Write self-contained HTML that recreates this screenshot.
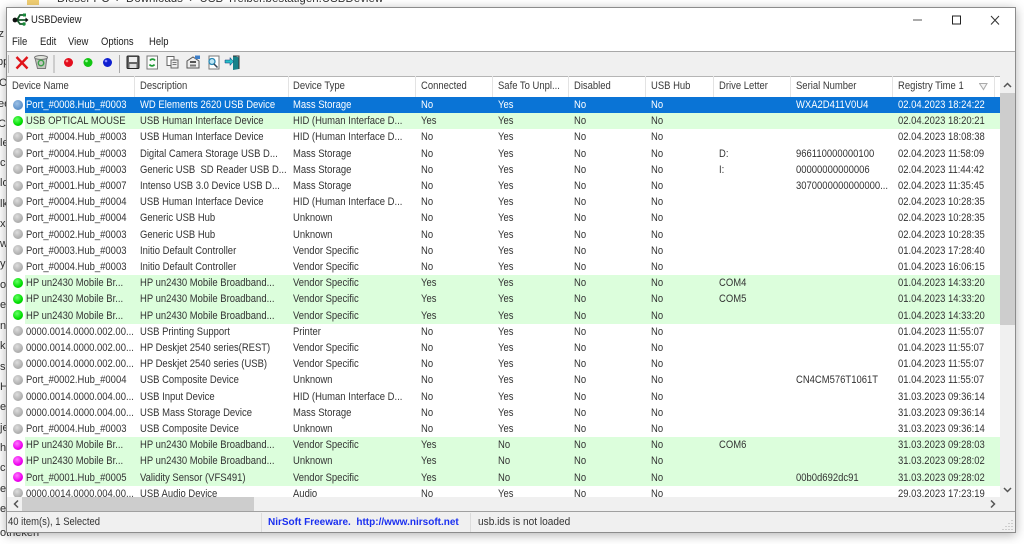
<!DOCTYPE html>
<html><head><meta charset="utf-8"><style>
html,body{margin:0;padding:0;width:1024px;height:544px;overflow:hidden;background:#fff;font-family:"Liberation Sans",sans-serif;color:#222}
div,span{box-sizing:border-box}
.abs{position:absolute}
.bgt{position:absolute;font-size:11px;color:#333;white-space:nowrap}
#win{position:absolute;left:6px;top:7px;width:1010px;height:526px;background:#f0f0f0;border:1px solid #8c8c8c;box-shadow:0 2px 10px rgba(0,0,0,.3);overflow:hidden;filter:blur(.3px)}
#win .p{position:absolute}
.t{transform:scaleX(.86);transform-origin:0 50%;white-space:pre}
.menu{position:absolute;top:27px;font-size:11px;line-height:14px;color:#222;transform:scaleX(.86);transform-origin:0 50%}
.h{position:absolute;top:71px;font-size:11px;line-height:14px;color:#3a3a3a;white-space:nowrap;transform:scaleX(.86);transform-origin:0 50%}
.sep{position:absolute;top:68px;width:1px;height:21px;background:#e3e3e3}
#list{position:absolute;left:0;top:89px;width:993px;height:400px;background:#fff;overflow:hidden}
.r{position:absolute;left:0;width:993px;height:16.2px;font-size:11px;line-height:16px;color:#333;white-space:pre}
.r b{position:absolute;font-weight:normal;top:0;transform:scaleX(.86);transform-origin:0 50%}
.r i{position:absolute;left:6px;top:2.5px;width:10px;height:10px;border-radius:50%;background:radial-gradient(circle at 40% 35%,#ddd,#aaa 70%,#888)}
.r u{position:absolute;left:18px;right:0;top:0;height:16.2px;text-decoration:none}
.g u{background:#dcfedc}
.s u{background:#0a74d6}
.s{color:#fff}
.s i{background:radial-gradient(circle at 40% 35%,#9cc0e6,#5a8fc8 70%,#3e70a8)}
.gd i{background:radial-gradient(circle at 40% 35%,#6f6,#0d0 60%,#0a0)}
.md i{background:radial-gradient(circle at 40% 35%,#f7f,#e0e 60%,#b0b)}
.c0{left:19px}.c1{left:133px}.c2{left:286px}.c3{left:414px}.c4{left:491px}.c5{left:567px}.c6{left:644px}.c7{left:712px}.c8{left:789px}.c9{left:891px}
</style></head><body>
<div class="bgt" style="left:57px;top:-7px;font-size:11.5px">Dieser PC &nbsp;›&nbsp; Downloads &nbsp;›&nbsp; USB-Treiber.bestätigen.USBDeview</div>
<div class="abs" style="left:27px;top:0;width:12px;height:5px;background:#f2cf74"></div>
<div class="bgt" style="left:-4px;top:28px">lz</div>
<div class="bgt" style="left:-3px;top:56px">pp</div>
<div class="bgt" style="left:-1px;top:77px">Or</div>
<div class="bgt" style="left:-2px;top:98px">ee</div>
<div class="bgt" style="left:-2px;top:118px">Cl</div>
<div class="bgt" style="left:0;top:137px">le</div>
<div class="bgt" style="left:0;top:157px">ck</div>
<div class="bgt" style="left:0;top:177px">lo</div>
<div class="bgt" style="left:0;top:198px">lk</div>
<div class="bgt" style="left:0;top:218px">xu</div>
<div class="bgt" style="left:0;top:238px">w</div>
<div class="bgt" style="left:0;top:258px">y</div>
<div class="bgt" style="left:0;top:279px">o</div>
<div class="bgt" style="left:0;top:299px">ep</div>
<div class="bgt" style="left:0;top:320px">nt</div>
<div class="bgt" style="left:0;top:340px">ks</div>
<div class="bgt" style="left:0;top:361px">si</div>
<div class="bgt" style="left:0;top:381px">H</div>
<div class="bgt" style="left:0;top:401px">el</div>
<div class="bgt" style="left:0;top:422px">je</div>
<div class="bgt" style="left:0;top:442px">h</div>
<div class="bgt" style="left:0;top:462px">ci</div>
<div class="bgt" style="left:0;top:483px">e</div>
<div class="bgt" style="left:0;top:503px">er</div>
<div class="bgt" style="left:0;top:527px">otrieken</div>

<div id="win">
<div class="p" style="left:0;top:0;width:1008px;height:43px;background:#fff"></div>
<div class="p" style="left:0;top:43px;width:1008px;height:1px;background:#a8a8a8"></div>

<svg class="p" style="left:5px;top:3px" width="18" height="18" viewBox="0 0 18 18"><path d="M2 9H15M5 9l3-5h4M5 9l3 4h3" fill="none" stroke="#17572b" stroke-width="1.8"/><path d="M16.5 9l-3-2.5v5z" fill="#111"/><circle cx="3" cy="9" r="2.4" fill="#111"/><rect x="11" y="2.5" width="3" height="3" fill="#188a3a"/><circle cx="12" cy="13" r="1.7" fill="#188a3a"/></svg>
<div class="p t" style="left:24px;top:5px;font-size:11px;line-height:14px;color:#222">USBDeview</div>

<svg class="p" style="left:904px;top:1px" width="95" height="30" viewBox="0 0 95 30"><path d="M2 11H11" stroke="#555" stroke-width="1"/><rect x="41.500" y="7" width="8" height="8" fill="none" stroke="#222" stroke-width="1"/><path d="M80 7l8 8.500M88 7l-8 8.500" stroke="#333" stroke-width="1" fill="none"/></svg>

<div class="menu" style="left:5px">File</div>
<div class="menu" style="left:33px">Edit</div>
<div class="menu" style="left:61px">View</div>
<div class="menu" style="left:94px">Options</div>
<div class="menu" style="left:142px">Help</div>

<svg class="p" style="left:0;top:44px" width="240" height="24" viewBox="0 0 240 24">
<path d="M1.500 3V21" stroke="#bbb"/>
<path d="M9.500 5l11 11.500M20.500 5l-11 11.500" stroke="#e0141a" stroke-width="2.400"/>
<path d="M28 6l12-1.500-1.500 12h-8z" fill="#c4c8c0" stroke="#777"/><ellipse cx="34" cy="5.500" rx="6.500" ry="2" fill="#dfe2db" stroke="#777"/><circle cx="34" cy="11" r="2.700" fill="none" stroke="#3f9f4b" stroke-width="1.500"/>
<path d="M47 3V21" stroke="#aaa"/>
<circle cx="61.500" cy="10.500" r="4.500" fill="#e30f1e"/><circle cx="60" cy="9" r="1.300" fill="#f88"/>
<circle cx="81" cy="10.500" r="4.500" fill="#12c512"/><circle cx="79.500" cy="9" r="1.300" fill="#9f9"/>
<circle cx="100.500" cy="10.500" r="4.500" fill="#0f1fd0"/><circle cx="99" cy="9" r="1.300" fill="#88f"/>
<path d="M112.500 3V21" stroke="#aaa"/>
<rect x="120" y="4" width="12" height="12.500" rx="1" fill="#666" stroke="#222"/><rect x="122" y="5" width="8" height="5" fill="#eee"/><rect x="122.500" y="12" width="7" height="4" fill="#ddd"/>
<rect x="140" y="4" width="10.500" height="13" fill="#fbfbfb" stroke="#777"/><path d="M143 8.500a3 3 0 0 1 5 0M147.500 12.500a3 3 0 0 1-5 0" fill="none" stroke="#1f9a35" stroke-width="1.700"/>
<rect x="160" y="4.500" width="7" height="9" fill="#fff" stroke="#666"/><rect x="164" y="8" width="7" height="8" fill="#eee" stroke="#666"/><path d="M165.500 10.500h4M165.500 12.500h4" stroke="#777"/>
<path d="M180 9l6-4 6 4v7h-12z" fill="#eee" stroke="#555"/><rect x="183" y="9" width="6" height="2" fill="#555"/><rect x="183" y="12.500" width="6" height="2" fill="#777"/><rect x="188" y="3.500" width="5" height="3.500" fill="#3f7fc8"/>
<rect x="202" y="4" width="10" height="13" fill="#fff" stroke="#777"/><circle cx="205" cy="9.500" r="3" fill="#bfe6f5" stroke="#2c89b5" stroke-width="1.300"/><path d="M207 12l3.500 3.500" stroke="#345" stroke-width="1.500"/>
<path d="M226 3.500l6 2V17l-6 1z" fill="#17828a"/><path d="M226 4h6v13" stroke="#333" fill="none"/><path d="M218 8h5V5.500l3.500 4-3.500 4V11h-5z" fill="#26bfc7" stroke="#137"  stroke-width=".5"/>
</svg>

<div class="p" style="left:0;top:68px;width:1008px;height:21px;background:#fff;border-top:1px solid #b5b5b5"></div>
<div class="h" style="left:5px">Device Name</div><div class="sep" style="left:127px"></div>
<div class="h" style="left:133px">Description</div><div class="sep" style="left:281px"></div>
<div class="h" style="left:286px">Device Type</div><div class="sep" style="left:408px"></div>
<div class="h" style="left:414px">Connected</div><div class="sep" style="left:485px"></div>
<div class="h" style="left:491px">Safe To Unpl...</div><div class="sep" style="left:561px"></div>
<div class="h" style="left:567px">Disabled</div><div class="sep" style="left:638px"></div>
<div class="h" style="left:644px">USB Hub</div><div class="sep" style="left:706px"></div>
<div class="h" style="left:712px">Drive Letter</div><div class="sep" style="left:783px"></div>
<div class="h" style="left:789px">Serial Number</div><div class="sep" style="left:885px"></div>
<div class="h" style="left:891px">Registry Time 1</div><div class="sep" style="left:987px"></div>
<svg class="p" style="left:972px;top:75px" width="10" height="8"><path d="M.5 .5H8L4.500 6.500z" fill="#f4f4f4" stroke="#aaa"/></svg>

<div id="list">
<div class="r s" style="top:0"><u></u><i></i><b class="c0">Port_#0008.Hub_#0003</b><b class="c1">WD Elements 2620 USB Device</b><b class="c2">Mass Storage</b><b class="c3">No</b><b class="c4">Yes</b><b class="c5">No</b><b class="c6">No</b><b class="c8">WXA2D411V0U4</b><b class="c9">02.04.2023 18:24:22</b></div>
<div class="r g gd" style="top:16.2px"><u></u><i></i><b class="c0">USB OPTICAL MOUSE</b><b class="c1">USB Human Interface Device</b><b class="c2">HID (Human Interface D...</b><b class="c3">Yes</b><b class="c4">Yes</b><b class="c5">No</b><b class="c6">No</b><b class="c9">02.04.2023 18:20:21</b></div>
<div class="r" style="top:32.4px"><i></i><b class="c0">Port_#0004.Hub_#0003</b><b class="c1">USB Human Interface Device</b><b class="c2">HID (Human Interface D...</b><b class="c3">No</b><b class="c4">Yes</b><b class="c5">No</b><b class="c6">No</b><b class="c9">02.04.2023 18:08:38</b></div>
<div class="r" style="top:48.6px"><i></i><b class="c0">Port_#0004.Hub_#0003</b><b class="c1">Digital Camera Storage USB D...</b><b class="c2">Mass Storage</b><b class="c3">No</b><b class="c4">Yes</b><b class="c5">No</b><b class="c6">No</b><b class="c7">D:</b><b class="c8">966110000000100</b><b class="c9">02.04.2023 11:58:09</b></div>
<div class="r" style="top:64.8px"><i></i><b class="c0">Port_#0003.Hub_#0003</b><b class="c1">Generic USB  SD Reader USB D...</b><b class="c2">Mass Storage</b><b class="c3">No</b><b class="c4">Yes</b><b class="c5">No</b><b class="c6">No</b><b class="c7">I:</b><b class="c8">00000000000006</b><b class="c9">02.04.2023 11:44:42</b></div>
<div class="r" style="top:81px"><i></i><b class="c0">Port_#0001.Hub_#0007</b><b class="c1">Intenso USB 3.0 Device USB D...</b><b class="c2">Mass Storage</b><b class="c3">No</b><b class="c4">Yes</b><b class="c5">No</b><b class="c6">No</b><b class="c8">3070000000000000...</b><b class="c9">02.04.2023 11:35:45</b></div>
<div class="r" style="top:97.2px"><i></i><b class="c0">Port_#0004.Hub_#0004</b><b class="c1">USB Human Interface Device</b><b class="c2">HID (Human Interface D...</b><b class="c3">No</b><b class="c4">Yes</b><b class="c5">No</b><b class="c6">No</b><b class="c9">02.04.2023 10:28:35</b></div>
<div class="r" style="top:113.4px"><i></i><b class="c0">Port_#0001.Hub_#0004</b><b class="c1">Generic USB Hub</b><b class="c2">Unknown</b><b class="c3">No</b><b class="c4">Yes</b><b class="c5">No</b><b class="c6">No</b><b class="c9">02.04.2023 10:28:35</b></div>
<div class="r" style="top:129.6px"><i></i><b class="c0">Port_#0002.Hub_#0003</b><b class="c1">Generic USB Hub</b><b class="c2">Unknown</b><b class="c3">No</b><b class="c4">Yes</b><b class="c5">No</b><b class="c6">No</b><b class="c9">02.04.2023 10:28:35</b></div>
<div class="r" style="top:145.8px"><i></i><b class="c0">Port_#0003.Hub_#0003</b><b class="c1">Initio Default Controller</b><b class="c2">Vendor Specific</b><b class="c3">No</b><b class="c4">Yes</b><b class="c5">No</b><b class="c6">No</b><b class="c9">01.04.2023 17:28:40</b></div>
<div class="r" style="top:162px"><i></i><b class="c0">Port_#0004.Hub_#0003</b><b class="c1">Initio Default Controller</b><b class="c2">Vendor Specific</b><b class="c3">No</b><b class="c4">Yes</b><b class="c5">No</b><b class="c6">No</b><b class="c9">01.04.2023 16:06:15</b></div>
<div class="r g gd" style="top:178.2px"><u></u><i></i><b class="c0">HP un2430 Mobile Br...</b><b class="c1">HP un2430 Mobile Broadband...</b><b class="c2">Vendor Specific</b><b class="c3">Yes</b><b class="c4">Yes</b><b class="c5">No</b><b class="c6">No</b><b class="c7">COM4</b><b class="c9">01.04.2023 14:33:20</b></div>
<div class="r g gd" style="top:194.4px"><u></u><i></i><b class="c0">HP un2430 Mobile Br...</b><b class="c1">HP un2430 Mobile Broadband...</b><b class="c2">Vendor Specific</b><b class="c3">Yes</b><b class="c4">Yes</b><b class="c5">No</b><b class="c6">No</b><b class="c7">COM5</b><b class="c9">01.04.2023 14:33:20</b></div>
<div class="r g gd" style="top:210.6px"><u></u><i></i><b class="c0">HP un2430 Mobile Br...</b><b class="c1">HP un2430 Mobile Broadband...</b><b class="c2">Vendor Specific</b><b class="c3">Yes</b><b class="c4">Yes</b><b class="c5">No</b><b class="c6">No</b><b class="c9">01.04.2023 14:33:20</b></div>
<div class="r" style="top:226.8px"><i></i><b class="c0">0000.0014.0000.002.00...</b><b class="c1">USB Printing Support</b><b class="c2">Printer</b><b class="c3">No</b><b class="c4">Yes</b><b class="c5">No</b><b class="c6">No</b><b class="c9">01.04.2023 11:55:07</b></div>
<div class="r" style="top:243px"><i></i><b class="c0">0000.0014.0000.002.00...</b><b class="c1">HP Deskjet 2540 series(REST)</b><b class="c2">Vendor Specific</b><b class="c3">No</b><b class="c4">Yes</b><b class="c5">No</b><b class="c6">No</b><b class="c9">01.04.2023 11:55:07</b></div>
<div class="r" style="top:259.2px"><i></i><b class="c0">0000.0014.0000.002.00...</b><b class="c1">HP Deskjet 2540 series (USB)</b><b class="c2">Vendor Specific</b><b class="c3">No</b><b class="c4">Yes</b><b class="c5">No</b><b class="c6">No</b><b class="c9">01.04.2023 11:55:07</b></div>
<div class="r" style="top:275.4px"><i></i><b class="c0">Port_#0002.Hub_#0004</b><b class="c1">USB Composite Device</b><b class="c2">Unknown</b><b class="c3">No</b><b class="c4">Yes</b><b class="c5">No</b><b class="c6">No</b><b class="c8">CN4CM576T1061T</b><b class="c9">01.04.2023 11:55:07</b></div>
<div class="r" style="top:291.6px"><i></i><b class="c0">0000.0014.0000.004.00...</b><b class="c1">USB Input Device</b><b class="c2">HID (Human Interface D...</b><b class="c3">No</b><b class="c4">Yes</b><b class="c5">No</b><b class="c6">No</b><b class="c9">31.03.2023 09:36:14</b></div>
<div class="r" style="top:307.8px"><i></i><b class="c0">0000.0014.0000.004.00...</b><b class="c1">USB Mass Storage Device</b><b class="c2">Mass Storage</b><b class="c3">No</b><b class="c4">Yes</b><b class="c5">No</b><b class="c6">No</b><b class="c9">31.03.2023 09:36:14</b></div>
<div class="r" style="top:324px"><i></i><b class="c0">Port_#0004.Hub_#0003</b><b class="c1">USB Composite Device</b><b class="c2">Unknown</b><b class="c3">No</b><b class="c4">Yes</b><b class="c5">No</b><b class="c6">No</b><b class="c9">31.03.2023 09:36:14</b></div>
<div class="r g md" style="top:340.2px"><u></u><i></i><b class="c0">HP un2430 Mobile Br...</b><b class="c1">HP un2430 Mobile Broadband...</b><b class="c2">Vendor Specific</b><b class="c3">Yes</b><b class="c4">No</b><b class="c5">No</b><b class="c6">No</b><b class="c7">COM6</b><b class="c9">31.03.2023 09:28:03</b></div>
<div class="r g md" style="top:356.4px"><u></u><i></i><b class="c0">HP un2430 Mobile Br...</b><b class="c1">HP un2430 Mobile Broadband...</b><b class="c2">Unknown</b><b class="c3">Yes</b><b class="c4">No</b><b class="c5">No</b><b class="c6">No</b><b class="c9">31.03.2023 09:28:02</b></div>
<div class="r g md" style="top:372.6px"><u></u><i></i><b class="c0">Port_#0001.Hub_#0005</b><b class="c1">Validity Sensor (VFS491)</b><b class="c2">Vendor Specific</b><b class="c3">Yes</b><b class="c4">No</b><b class="c5">No</b><b class="c6">No</b><b class="c8">00b0d692dc91</b><b class="c9">31.03.2023 09:28:02</b></div>
<div class="r" style="top:388.8px"><i></i><b class="c0">0000.0014.0000.004.00...</b><b class="c1">USB Audio Device</b><b class="c2">Audio</b><b class="c3">No</b><b class="c4">Yes</b><b class="c5">No</b><b class="c6">No</b><b class="c9">29.03.2023 17:23:19</b></div>
</div>

<!-- vertical scrollbar -->
<div class="p" style="left:993px;top:68px;width:15px;height:421px;background:#f0f0f0"></div>
<div class="p" style="left:993px;top:85px;width:15px;height:232px;background:#cdcdcd"></div>
<svg class="p" style="left:993px;top:71px" width="15" height="12"><path d="M4 8l3.500-3.500L11 8" fill="none" stroke="#555" stroke-width="1.500"/></svg>
<svg class="p" style="left:993px;top:477px" width="15" height="12"><path d="M4 3l3.500 3.500L11 3" fill="none" stroke="#555" stroke-width="1.500"/></svg>
<!-- horizontal scrollbar -->
<div class="p" style="left:0;top:489px;width:1008px;height:14px;background:#f0f0f0"></div>
<div class="p" style="left:15px;top:489px;width:232px;height:14px;background:#cdcdcd"></div>
<svg class="p" style="left:3px;top:490px" width="12" height="12"><path d="M8 2.500L4.500 6 8 9.500" fill="none" stroke="#555" stroke-width="1.500"/></svg>
<svg class="p" style="left:980px;top:490px" width="12" height="12"><path d="M4 2.500L7.500 6 4 9.500" fill="none" stroke="#555" stroke-width="1.500"/></svg>

<!-- status bar -->
<div class="p" style="left:0;top:503px;width:1008px;height:1px;background:#a0a0a0"></div>
<div class="p t" style="left:1px;top:507px;font-size:11px;line-height:14px;color:#333">40 item(s), 1 Selected</div>
<div class="p" style="left:254px;top:505px;width:1px;height:19px;background:#dcdcdc"></div>
<div class="p" style="left:261px;top:508px;font-size:10px;line-height:14px;font-weight:bold;color:#1a2ff0;white-space:pre">NirSoft Freeware.  http://www.nirsoft.net</div>
<div class="p" style="left:463px;top:505px;width:1px;height:19px;background:#dcdcdc"></div>
<div class="p" style="left:471px;top:507px;font-size:11px;line-height:14px;color:#333;white-space:pre;transform:scaleX(.92);transform-origin:0 50%">usb.ids is not loaded</div>
<svg class="p" style="left:995px;top:511px" width="12" height="12"><path d="M9.500 1.500h1M6.500 4.500h1M9.500 4.500h1M3.500 7.500h1M6.500 7.500h1M9.500 7.500h1M.5 10.500h1M3.500 10.500h1M6.500 10.500h1M9.500 10.500h1" stroke="#aaa"/></svg>
</div>
</body></html>
